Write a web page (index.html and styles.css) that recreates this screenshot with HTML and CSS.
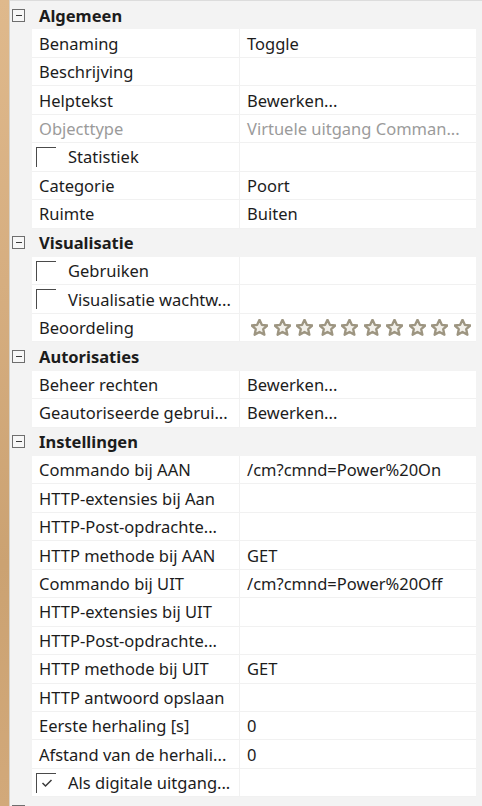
FILE: index.html
```html
<!DOCTYPE html>
<html>
<head>
<meta charset="utf-8">
<link rel="stylesheet" href="styles.css">
</head>
<body>
<div class="wood"></div>
<div class="panel">
  <div class="topline"></div>

  <div class="row head"><div class="gutter"><span class="exp minus"></span></div><div class="htext">Algemeen</div></div>
  <div class="row"><div class="gutter"></div><div class="cells"><div class="name">Benaming</div><div class="val">Toggle</div></div><div class="rm"></div></div>
  <div class="row"><div class="gutter"></div><div class="cells"><div class="name">Beschrijving</div><div class="val"></div></div><div class="rm"></div></div>
  <div class="row"><div class="gutter"></div><div class="cells"><div class="name">Helptekst</div><div class="val">Bewerken...</div></div><div class="rm"></div></div>
  <div class="row"><div class="gutter"></div><div class="cells dis"><div class="name">Objecttype</div><div class="val">Virtuele uitgang Comman...</div></div><div class="rm"></div></div>
  <div class="row"><div class="gutter"></div><div class="cells"><div class="name cb"><span class="box"></span>Statistiek</div><div class="val"></div></div><div class="rm"></div></div>
  <div class="row"><div class="gutter"></div><div class="cells"><div class="name">Categorie</div><div class="val">Poort</div></div><div class="rm"></div></div>
  <div class="row"><div class="gutter"></div><div class="cells"><div class="name">Ruimte</div><div class="val">Buiten</div></div><div class="rm"></div></div>

  <div class="row head"><div class="gutter"><span class="exp minus"></span></div><div class="htext">Visualisatie</div></div>
  <div class="row"><div class="gutter"></div><div class="cells"><div class="name cb"><span class="box"></span>Gebruiken</div><div class="val"></div></div><div class="rm"></div></div>
  <div class="row"><div class="gutter"></div><div class="cells"><div class="name cb"><span class="box"></span>Visualisatie wachtw...</div><div class="val"></div></div><div class="rm"></div></div>
  <div class="row"><div class="gutter"></div><div class="cells"><div class="name">Beoordeling</div><div class="val stars">
    <svg class="star" viewBox="0 0 16 16"><polygon points="8,0.8 10.2,5.5 15.4,6.1 11.5,9.6 12.6,14.8 8,12.2 3.4,14.8 4.5,9.6 0.6,6.1 5.8,5.5"/></svg>
    <svg class="star" viewBox="0 0 16 16"><polygon points="8,0.8 10.2,5.5 15.4,6.1 11.5,9.6 12.6,14.8 8,12.2 3.4,14.8 4.5,9.6 0.6,6.1 5.8,5.5"/></svg>
    <svg class="star" viewBox="0 0 16 16"><polygon points="8,0.8 10.2,5.5 15.4,6.1 11.5,9.6 12.6,14.8 8,12.2 3.4,14.8 4.5,9.6 0.6,6.1 5.8,5.5"/></svg>
    <svg class="star" viewBox="0 0 16 16"><polygon points="8,0.8 10.2,5.5 15.4,6.1 11.5,9.6 12.6,14.8 8,12.2 3.4,14.8 4.5,9.6 0.6,6.1 5.8,5.5"/></svg>
    <svg class="star" viewBox="0 0 16 16"><polygon points="8,0.8 10.2,5.5 15.4,6.1 11.5,9.6 12.6,14.8 8,12.2 3.4,14.8 4.5,9.6 0.6,6.1 5.8,5.5"/></svg>
    <svg class="star" viewBox="0 0 16 16"><polygon points="8,0.8 10.2,5.5 15.4,6.1 11.5,9.6 12.6,14.8 8,12.2 3.4,14.8 4.5,9.6 0.6,6.1 5.8,5.5"/></svg>
    <svg class="star" viewBox="0 0 16 16"><polygon points="8,0.8 10.2,5.5 15.4,6.1 11.5,9.6 12.6,14.8 8,12.2 3.4,14.8 4.5,9.6 0.6,6.1 5.8,5.5"/></svg>
    <svg class="star" viewBox="0 0 16 16"><polygon points="8,0.8 10.2,5.5 15.4,6.1 11.5,9.6 12.6,14.8 8,12.2 3.4,14.8 4.5,9.6 0.6,6.1 5.8,5.5"/></svg>
    <svg class="star" viewBox="0 0 16 16"><polygon points="8,0.8 10.2,5.5 15.4,6.1 11.5,9.6 12.6,14.8 8,12.2 3.4,14.8 4.5,9.6 0.6,6.1 5.8,5.5"/></svg>
    <svg class="star" viewBox="0 0 16 16"><polygon points="8,0.8 10.2,5.5 15.4,6.1 11.5,9.6 12.6,14.8 8,12.2 3.4,14.8 4.5,9.6 0.6,6.1 5.8,5.5"/></svg>
  </div></div><div class="rm"></div></div>

  <div class="row head"><div class="gutter"><span class="exp minus"></span></div><div class="htext">Autorisaties</div></div>
  <div class="row"><div class="gutter"></div><div class="cells"><div class="name">Beheer rechten</div><div class="val">Bewerken...</div></div><div class="rm"></div></div>
  <div class="row"><div class="gutter"></div><div class="cells"><div class="name">Geautoriseerde gebrui...</div><div class="val">Bewerken...</div></div><div class="rm"></div></div>

  <div class="row head"><div class="gutter"><span class="exp minus"></span></div><div class="htext">Instellingen</div></div>
  <div class="row"><div class="gutter"></div><div class="cells"><div class="name">Commando bij AAN</div><div class="val">/cm?cmnd=Power%20On</div></div><div class="rm"></div></div>
  <div class="row"><div class="gutter"></div><div class="cells"><div class="name">HTTP-extensies bij Aan</div><div class="val"></div></div><div class="rm"></div></div>
  <div class="row"><div class="gutter"></div><div class="cells"><div class="name">HTTP-Post-opdrachte...</div><div class="val"></div></div><div class="rm"></div></div>
  <div class="row"><div class="gutter"></div><div class="cells"><div class="name">HTTP methode bij AAN</div><div class="val">GET</div></div><div class="rm"></div></div>
  <div class="row"><div class="gutter"></div><div class="cells"><div class="name">Commando bij UIT</div><div class="val">/cm?cmnd=Power%20Off</div></div><div class="rm"></div></div>
  <div class="row"><div class="gutter"></div><div class="cells"><div class="name">HTTP-extensies bij UIT</div><div class="val"></div></div><div class="rm"></div></div>
  <div class="row"><div class="gutter"></div><div class="cells"><div class="name">HTTP-Post-opdrachte...</div><div class="val"></div></div><div class="rm"></div></div>
  <div class="row"><div class="gutter"></div><div class="cells"><div class="name">HTTP methode bij UIT</div><div class="val">GET</div></div><div class="rm"></div></div>
  <div class="row"><div class="gutter"></div><div class="cells"><div class="name">HTTP antwoord opslaan</div><div class="val"></div></div><div class="rm"></div></div>
  <div class="row"><div class="gutter"></div><div class="cells"><div class="name">Eerste herhaling [s]</div><div class="val">0</div></div><div class="rm"></div></div>
  <div class="row"><div class="gutter"></div><div class="cells"><div class="name">Afstand van de herhali...</div><div class="val">0</div></div><div class="rm"></div></div>
  <div class="row"><div class="gutter"></div><div class="cells"><div class="name cb"><span class="box"><svg class="tick" viewBox="0 0 12 10"><polyline points="1.5,5 4.5,8 10.5,2"/></svg></span>Als digitale uitgang...</div><div class="val"></div></div><div class="rm"></div></div>

  <div class="row head"><div class="gutter"><span class="exp plus"></span></div><div class="htext">Logica en MQTT-koppeling</div></div>
</div>
</body>
</html>
```

FILE: styles.css
```css
html, body {
  margin: 0;
  padding: 0;
  width: 482px;
  height: 806px;
  overflow: hidden;
}
body {
  display: flex;
  font-family: "Noto Sans", "Open Sans", sans-serif;
  font-size: 16.5px;
  color: #1c1c1c;
  background: #f3f3f3;
}
.wood {
  width: 9px;
  flex: none;
  background: linear-gradient(180deg, #dfb98c 0%, #d6ae80 35%, #cba272 70%, #d2a97a 100%);
  border-right: 1px solid #d8d2c8;
}
.panel {
  flex: 1;
  display: flex;
  flex-direction: column;
  background: #f3f3f3;
}
.topline {
  height: 1px;
  flex: none;
  background: #dcdcdc;
}
.row {
  display: flex;
  height: 28.45px;
  flex: none;
}
.gutter {
  width: 22px;
  flex: none;
  display: flex;
  align-items: center;
}
.cells {
  width: 444px;
  flex: none;
  display: flex;
  background: #ffffff;
  border-bottom: 1px solid #f1f1f1;
  box-sizing: border-box;
}
.rm {
  flex: 1;
}
.name {
  width: 208px;
  flex: none;
  box-sizing: border-box;
  border-right: 1px solid #f1f1f1;
  padding-left: 7px;
  display: flex;
  align-items: center;
  white-space: nowrap;
  overflow: hidden;
}
.val {
  flex: 1;
  padding-left: 7px;
  display: flex;
  align-items: center;
  white-space: nowrap;
  overflow: hidden;
}
.dis .name, .dis .val {
  color: #9b9b9b;
}
.name.cb {
  padding-left: 4px;
}
.box {
  width: 20px;
  height: 20px;
  box-sizing: border-box;
  border-top: 1.5px solid #4a4a4a;
  border-left: 1.5px solid #4a4a4a;
  margin-right: 12px;
  flex: none;
  display: flex;
  align-items: center;
  justify-content: center;
}
.tick {
  width: 12px;
  height: 10px;
  fill: none;
  stroke: #3a3a3a;
  stroke-width: 1.5;
}
.head .htext {
  font-weight: bold;
  padding-left: 7px;
  display: flex;
  align-items: center;
  white-space: nowrap;
}
.exp {
  width: 13px;
  height: 13px;
  box-sizing: border-box;
  border: 1px solid #6e6e6e;
  margin-left: 2px;
  position: relative;
  background: #f7f7f7;
}
.exp::before {
  content: "";
  position: absolute;
  left: 2.5px;
  top: 5px;
  width: 6px;
  height: 1px;
  background: #3c3c3c;
}
.exp.plus::after {
  content: "";
  position: absolute;
  left: 5px;
  top: 2.5px;
  width: 1px;
  height: 6px;
  background: #3c3c3c;
}
.stars {
  padding-left: 11px;
  gap: 5.5px;
}
.star {
  width: 17px;
  height: 17px;
  flex: none;
  fill: #f2f0ea;
  stroke: #9d9581;
  stroke-width: 2.2;
  stroke-linejoin: round;
}
```
